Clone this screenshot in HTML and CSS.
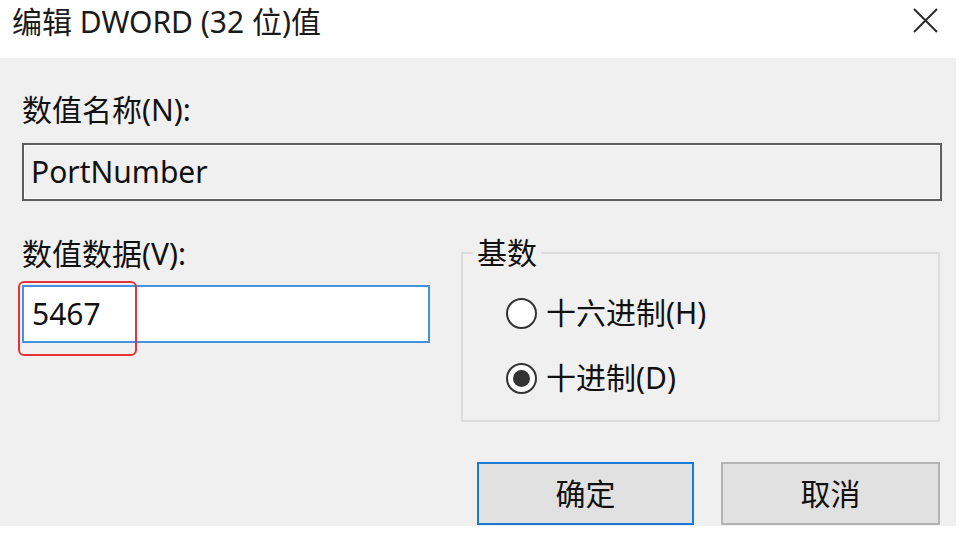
FILE: index.html
```html
<!DOCTYPE html>
<html lang="zh-CN">
<head>
<meta charset="utf-8">
<title>编辑 DWORD (32 位)值</title>
<link rel="stylesheet" href="styles.css">
</head>
<body>
<div class="window">
  <div class="titlebar">
    <span class="title">编辑 DWORD (32 位)值</span>
    <span class="close" aria-label="关闭">
      <svg width="25" height="25" viewBox="0 0 25 25"><path d="M1 1 L24 24 M24 1 L1 24" stroke="#2b2b2b" stroke-width="2" fill="none"/></svg>
    </span>
  </div>
  <div class="dialog">
    <div class="label">数值名称(N):</div>
    <div class="namebox">PortNumber</div>
    <div class="row">
      <div class="col-left">
        <div class="label">数值数据(V):</div>
        <div class="inputwrap">
          <div class="valuebox">5467</div>
          <span class="highlight"></span>
        </div>
      </div>
      <fieldset class="group">
        <legend>基数</legend>
        <div class="radio"><span class="dot"></span><span>十六进制(H)</span></div>
        <div class="radio"><span class="dot checked"></span><span>十进制(D)</span></div>
      </fieldset>
    </div>
    <div class="buttons">
      <div class="btn primary">确定</div>
      <div class="btn cancel">取消</div>
    </div>
  </div>
</div>
</body>
</html>
```

FILE: styles.css
```css
html, body {
  margin: 0;
  padding: 0;
  background: #ffffff;
}
body {
  width: 963px;
  height: 539px;
  overflow: hidden;
  font-family: "Noto Sans", "Noto Sans CJK SC", sans-serif;
  font-size: 30px;
  line-height: 36px;
  color: #111;
}
.window {
  width: 963px;
}
.titlebar {
  height: 58px;
  box-sizing: border-box;
  display: flex;
  justify-content: space-between;
  align-items: flex-start;
  padding: 4px 25px 0 12px;
}
.title {
  color: #1a1a1a;
  font-size: 30px;
}
.close {
  display: block;
  width: 25px;
  height: 25px;
  margin-top: 4px;
}
.close svg { display: block; }
.dialog {
  width: 956px;
  height: 468px;
  box-sizing: border-box;
  background: #f0f0f0;
  padding: 34px 14px 0 22px;
  display: flex;
  flex-direction: column;
}
.label {
  height: 36px;
  white-space: nowrap;
}
.namebox {
  margin-top: 15px;
  height: 58px;
  box-sizing: border-box;
  border: 2px solid #5e5e5e;
  box-shadow: inset 0 0 0 1px #fafafa;
  padding: 0 0 0 7px;
  display: flex;
  align-items: center;
}
.row {
  margin-top: 35px;
  display: grid;
  grid-template-columns: 408px 479px;
  column-gap: 31px;
  align-items: start;
}
.col-left {
  display: flex;
  flex-direction: column;
}
.inputwrap {
  position: relative;
  margin-top: 13px;
}
.valuebox {
  height: 58px;
  box-sizing: border-box;
  border: 2px solid #4592e0;
  background: #fff;
  padding-left: 8px;
  display: flex;
  align-items: center;
}
.highlight {
  position: absolute;
  left: -4px;
  top: -4px;
  width: 119px;
  height: 75px;
  box-sizing: border-box;
  border: 2px solid #e5323b;
  border-radius: 6px;
}
.group {
  margin: 2px 0 0 0;
  padding: 27px 0 24px 43px;
  border: 2px solid #dcdcdc;
  min-width: 0;
}
.group legend {
  margin-left: -33px;
  padding: 0 4px;
  line-height: 30px;
  height: 30px;
}
.radio {
  height: 36px;
  display: flex;
  align-items: center;
  gap: 9px;
}
.radio + .radio {
  margin-top: 29px;
}
.dot {
  width: 31px;
  height: 31px;
  box-sizing: border-box;
  border: 2px solid #333;
  border-radius: 50%;
  background: #fff;
  display: flex;
  align-items: center;
  justify-content: center;
  flex: none;
}
.dot.checked::after {
  content: "";
  width: 17px;
  height: 17px;
  border-radius: 50%;
  background: #333;
}
.buttons {
  margin-top: 40px;
  display: flex;
  justify-content: flex-end;
  gap: 27px;
  padding-right: 2px;
}
.btn {
  height: 63px;
  box-sizing: border-box;
  background: #e1e1e1;
  display: flex;
  align-items: center;
  justify-content: center;
  color: #111;
}
.btn.primary {
  width: 217px;
  border: 2px solid #1a7ad6;
}
.btn.cancel {
  width: 219px;
  border: 2px solid #b3b3b3;
}
```
